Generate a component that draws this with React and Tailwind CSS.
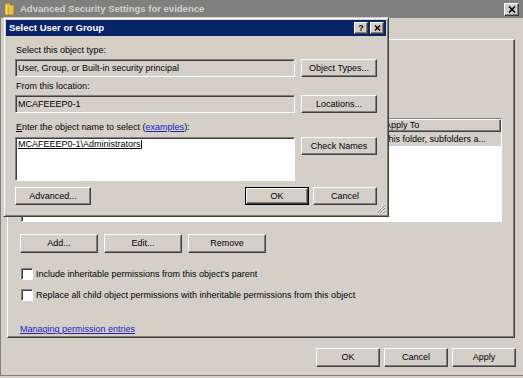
import React from "react";

const raised =
  "border border-t-white border-l-white border-r-[#404040] border-b-[#404040] shadow-[inset_-1px_-1px_0_#808080]";
const sunken =
  "border border-t-[#808080] border-l-[#808080] border-r-white border-b-white shadow-[inset_1px_1px_0_#404040]";

function Btn({ className = "", children, def = false }) {
  if (def) {
    return (
      <div className={`border border-black ${className}`}>
        <div className={`w-full h-full flex items-center justify-center bg-[#d4d0c8] ${raised}`}>
          {children}
        </div>
      </div>
    );
  }
  return (
    <div className={`flex items-center justify-center bg-[#d4d0c8] ${raised} ${className}`}>
      {children}
    </div>
  );
}

function CloseGlyph({ size = 8 }) {
  return (
    <svg width={size} height={size - 1} viewBox="0 0 8 7">
      <path d="M1 0.5 L7 6.5 M7 0.5 L1 6.5" stroke="#000" strokeWidth="1.6" />
    </svg>
  );
}

function Checkbox() {
  return <div className={`w-[12px] h-[12px] bg-white shrink-0 ${sunken}`} />;
}

function Folder() {
  return (
    <svg width="11" height="14" viewBox="0 0 11 14">
      <path d="M1 1 L6 1 L6 3 L10 3 L10 13 L1 13 Z" fill="#e8c14a" stroke="#a07818" strokeWidth="0.8" />
      <path d="M1 1 L4 3 L4 13 L1 13 Z" fill="#f6dc80" stroke="#a07818" strokeWidth="0.6" />
    </svg>
  );
}

export default function App() {
  return (
    <div className="relative w-[523px] h-[378px] overflow-hidden bg-[#d4d0c8] font-['Liberation_Sans',Arial,sans-serif] text-[9px] text-black leading-none">
      {/* Outer window */}
      <div className="flex flex-col w-[523px] h-[376px] border-l border-b border-[#808080]">
        <div className="h-[18px] bg-[#808080] flex items-center pl-[3px] pr-[4px]">
          <Folder />
          <span className="ml-[5px] font-bold text-[9.5px] text-[#d4d0c8]">
            Advanced Security Settings for evidence
          </span>
          <div className="ml-auto">
            <Btn className="w-[15px] h-[13px]">
              <CloseGlyph />
            </Btn>
          </div>
        </div>

        <div className="ml-[6px] mr-[8px] mt-[21px] h-[299px] border border-t-white border-l-white border-r-[#404040] border-b-[#404040] shadow-[inset_-1px_-1px_0_#808080] flex flex-col pl-[13px] pr-[12px]">
          {/* list */}
          <div className={`mt-[78px] h-[104px] bg-white flex flex-col ${sunken}`}>
            <div className="h-[13px] flex shrink-0">
              <div className={`w-[90px] ${raised} bg-[#d4d0c8]`} />
              <div className={`w-[120px] ${raised} bg-[#d4d0c8]`} />
              <div className={`w-[70px] ${raised} bg-[#d4d0c8]`} />
              <div className={`w-[79px] ${raised} bg-[#d4d0c8]`} />
              <div className={`flex-1 ${raised} bg-[#d4d0c8] pl-[3px] flex items-center`}>Apply To</div>
            </div>
            <div className="h-[14px] flex bg-[#d4d0c8] items-center">
              <div className="w-[359px]" />
              <div className="flex-1 pl-[2px] whitespace-nowrap">This folder, subfolders a...</div>
            </div>
          </div>

          <div className="mt-[12px] flex gap-[6px] -ml-[1px]">
            <Btn className="w-[78px] h-[19px]">Add...</Btn>
            <Btn className="w-[78px] h-[19px]">Edit...</Btn>
            <Btn className="w-[78px] h-[19px]">Remove</Btn>
          </div>

          <div className="mt-[15px] flex items-center gap-[3px]">
            <Checkbox />
            <span>Include inheritable permissions from this object's parent</span>
          </div>
          <div className="mt-[9px] flex items-center gap-[3px]">
            <Checkbox />
            <span>Replace all child object permissions with inheritable permissions from this object</span>
          </div>

          <div className="mt-[24px] -ml-[1px]">
            <span className="underline text-[#2020c0]">Managing permission entries</span>
          </div>
        </div>

        <div className="mt-[10px] flex justify-end gap-[4px] mr-[7px]">
          <Btn className="w-[64px] h-[19px]">OK</Btn>
          <Btn className="w-[64px] h-[19px]">Cancel</Btn>
          <Btn className="w-[64px] h-[19px]">Apply</Btn>
        </div>
      </div>

      {/* Select User or Group dialog */}
      <div className="absolute left-[3px] top-[17px] w-[386px] h-[200px] bg-[#d4d0c8] border border-t-[#d4d0c8] border-l-[#d4d0c8] border-r-[#404040] border-b-[#404040] shadow-[inset_1px_1px_0_#fff,inset_-1px_-1px_0_#808080] flex flex-col p-[2px]">
        <div className="h-[16px] bg-[#0a246a] flex items-center pl-[3px] pr-[2px] shrink-0">
          <span className="font-bold text-white text-[9.5px]">Select User or Group</span>
          <div className="ml-auto flex gap-[2px]">
            <Btn className="w-[14px] h-[12px] font-bold text-[9px]">?</Btn>
            <Btn className="w-[14px] h-[12px]">
              <CloseGlyph size={7} />
            </Btn>
          </div>
        </div>

        <div className="flex flex-col pl-[9px] pr-[9px]">
          <div className="mt-[10px] h-[10px] pl-[1px]">Select this object type:</div>
          <div className="mt-[3px] flex gap-[6px]">
            <div className={`w-[280px] h-[18px] flex items-center pl-[2px] ${sunken}`}>
              User, Group, or Built-in security principal
            </div>
            <Btn className="w-[76px] h-[18px]">Object Types...</Btn>
          </div>

          <div className="mt-[5px] h-[10px] pl-[1px]">From this location:</div>
          <div className="mt-[3px] flex gap-[6px]">
            <div className={`w-[280px] h-[18px] flex items-center pl-[2px] ${sunken}`}>MCAFEEEP0-1</div>
            <Btn className="w-[76px] h-[18px]">Locations...</Btn>
          </div>

          <div className="mt-[10px] h-[10px] pl-[1px]">
            <span className="underline">E</span>nter the object name to select (
            <span className="underline text-[#2020c0]">examples</span>):
          </div>
          <div className="mt-[4px] flex gap-[6px] items-start">
            <div className={`w-[280px] h-[44px] bg-white pl-[2px] pt-[2px] ${sunken}`}>
              <span className="underline">MCAFEEEP0-1\Administrators</span>
              <span className="inline-block w-px h-[9px] bg-black align-middle" />
            </div>
            <Btn className="w-[76px] h-[18px]">Check Names</Btn>
          </div>

          <div className="mt-[6px] flex items-center">
            <Btn className="w-[76px] h-[18px]">Advanced...</Btn>
            <div className="ml-auto flex gap-[4px]">
              <Btn def className="w-[64px] h-[18px]">OK</Btn>
              <Btn className="w-[64px] h-[18px]">Cancel</Btn>
            </div>
          </div>
        </div>

        <svg className="absolute right-[2px] bottom-[2px]" width="11" height="11" viewBox="0 0 11 11">
          <path d="M10 1 L1 10 M10 4 L4 10 M10 7 L7 10" stroke="#fff" strokeWidth="1" />
          <path d="M10 2 L2 10 M10 5 L5 10 M10 8 L8 10" stroke="#808080" strokeWidth="1" />
        </svg>
      </div>
    </div>
  );
}
